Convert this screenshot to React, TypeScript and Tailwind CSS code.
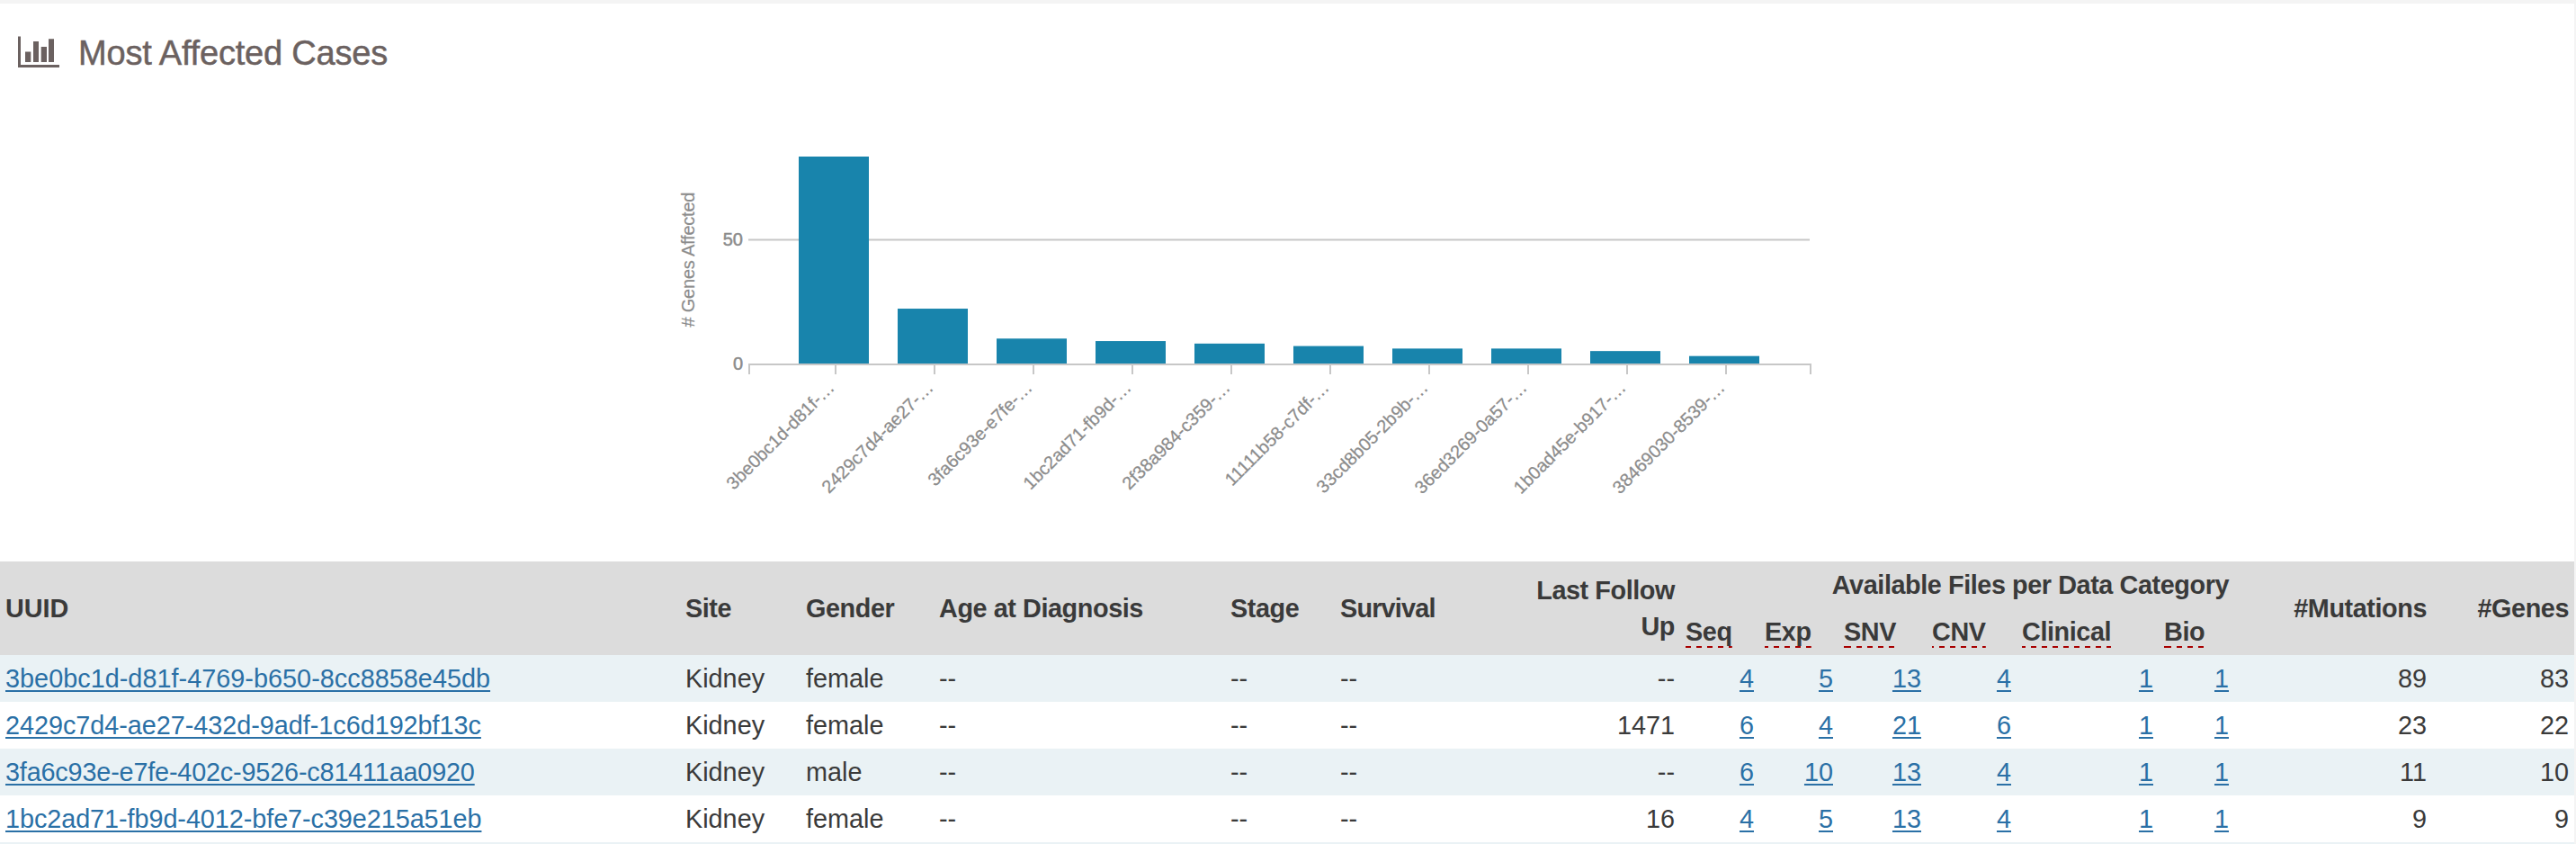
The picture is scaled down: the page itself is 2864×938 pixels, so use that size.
import type { ReactNode } from "react";

const bars = [
  { id: "3be0bc1d-d81f-…", genes: 83 },
  { id: "2429c7d4-ae27-…", genes: 22 },
  { id: "3fa6c93e-e7fe-…", genes: 10 },
  { id: "1bc2ad71-fb9d-…", genes: 9 },
  { id: "2f38a984-c359-…", genes: 8 },
  { id: "11111b58-c7df-…", genes: 7 },
  { id: "33cd8b05-2b9b-…", genes: 6 },
  { id: "36ed3269-0a57-…", genes: 6 },
  { id: "1b0ad45e-b917-…", genes: 5 },
  { id: "38469030-8539-…", genes: 3 },
];

const unit = 230 / 83;

type Row = {
  uuid: string;
  tracking: string;
  gender: string;
  followUp: string;
  files: number[];
  mutations: number;
  genes: number;
};

const rows: Row[] = [
  { uuid: "3be0bc1d-d81f-4769-b650-8cc8858e45db", tracking: "tracking-[0.03px]", gender: "female", followUp: "--", files: [4, 5, 13, 4, 1, 1], mutations: 89, genes: 83 },
  { uuid: "2429c7d4-ae27-432d-9adf-1c6d192bf13c", tracking: "tracking-[-0.03px]", gender: "female", followUp: "1471", files: [6, 4, 21, 6, 1, 1], mutations: 23, genes: 22 },
  { uuid: "3fa6c93e-e7fe-402c-9526-c81411aa0920", tracking: "tracking-[-0.17px]", gender: "male", followUp: "--", files: [6, 10, 13, 4, 1, 1], mutations: 11, genes: 10 },
  { uuid: "1bc2ad71-fb9d-4012-bfe7-c39e215a51eb", tracking: "tracking-[-0.06px]", gender: "female", followUp: "16", files: [4, 5, 13, 4, 1, 1], mutations: 9, genes: 9 },
];

const categories = [
  { name: "Seq", dash: "bg-[repeating-linear-gradient(90deg,#a80000_0_6px,transparent_6px_12px)]" },
  { name: "Exp", dash: "bg-[repeating-linear-gradient(90deg,#a80000_-2px_4px,transparent_4px_10px)]" },
  { name: "SNV", dash: "bg-[linear-gradient(90deg,#a80000_2px,transparent_2px),repeating-linear-gradient(90deg,#a80000_2px_8px,transparent_8px_14px)]" },
  { name: "CNV", dash: "bg-[repeating-linear-gradient(90deg,#a80000_-4px_2px,transparent_2px_8px)]" },
  { name: "Clinical", dash: "bg-[repeating-linear-gradient(90deg,#a80000_-2px_4px,transparent_4px_10px)]" },
  { name: "Bio", dash: "bg-[linear-gradient(90deg,#a80000_2px,transparent_2px),repeating-linear-gradient(90deg,#a80000_2px_8px,transparent_8px_14px)]" },
];

function Chart() {
  return (
    <svg width="1300" height="440" viewBox="740 150 1300 440" className="block">
      <g fill="#c7c7c7">
        <rect x="832" y="265.5" width="1180" height="2" />
        <rect x="832" y="404" width="1182" height="2" />
        <rect x="832" y="404" width="2" height="12" />
        <rect x="2012" y="404" width="2" height="12" />
        {bars.map((b, i) => (
          <rect key={b.id} x={928 + i * 110} y="404" width="2" height="12" />
        ))}
      </g>
      {bars.map((b, i) => (
        <rect key={b.id} x={888 + i * 110} y={404 - b.genes * unit} width="78" height={b.genes * unit} fill="#1884ac" />
      ))}
      <g fill="#8c8c8c" fontSize="20">
        <text x="826" y="273" textAnchor="end" stroke="#8c8c8c" strokeWidth="0.5">50</text>
        <text x="826" y="411" textAnchor="end" stroke="#8c8c8c" strokeWidth="0.5">0</text>
        <text transform="translate(772 288.5) rotate(-90)" textAnchor="middle" textLength="150" stroke="#8c8c8c" strokeWidth="0.2">
          # Genes Affected
        </text>
        {bars.map((b, i) => (
          <text
            key={b.id}
            transform={`translate(${929 + i * 110} 432) rotate(-45)`}
            textAnchor="end"
            stroke="#8c8c8c"
            strokeWidth="0.25"
          >
            {b.id}
          </text>
        ))}
      </g>
    </svg>
  );
}

function Link({ className = "", children }: { className?: string; children: ReactNode }) {
  return (
    <a
      href="#"
      className={`text-[#2a70a6] underline decoration-2 underline-offset-[3px] [text-decoration-skip-ink:none] ${className}`}
    >
      {children}
    </a>
  );
}

export default function App() {
  return (
    <div className="h-[938px] w-[2864px] overflow-hidden border-t-4 border-r-2 border-[#f4f4f4] bg-white font-['Liberation_Sans',Arial,Helvetica,sans-serif] text-[#3a3a3a]">
      <div className="flex h-[146px] items-start pt-[33px] pl-5 text-[#6b6160]">
        <svg width="46" height="36" viewBox="0 0 46 36" fill="currentColor" className="mt-[3px]">
          <path d="M0 .5h3V32h43v3H0z" />
          <path d="M8 17.5h6.3V29H8zM17 6h6v23h-6zM25.7 12H32v17h-6.3zM34 3.2h6V29h-6z" />
        </svg>
        <h1 className="ml-[21px] text-[38px] leading-[44px] tracking-[-0.2px] [-webkit-text-stroke:0.5px_#6b6160]">
          Most Affected Cases
        </h1>
      </div>
      <div className="flex h-[474px] pl-[740px]">
        <Chart />
      </div>
      <table className="w-[2862px] table-fixed border-collapse text-[28.8px] leading-10">
        <colgroup>
          <col className="w-[756px]" />
          <col className="w-[134px]" />
          <col className="w-[148px]" />
          <col className="w-[324px]" />
          <col className="w-[122px]" />
          <col className="w-[204px]" />
          <col className="w-[180px]" />
          <col className="w-[88px]" />
          <col className="w-[88px]" />
          <col className="w-[98px]" />
          <col className="w-[100px]" />
          <col className="w-[158px]" />
          <col className="w-[84px]" />
          <col className="w-[220px]" />
          <col className="w-[158px]" />
        </colgroup>
        <thead className="bg-[#dcdcdc] font-bold tracking-[-0.42px]">
          <tr className="h-[52px]">
            <th rowSpan={2} className="px-1.5 py-0 text-left tracking-normal">UUID</th>
            <th rowSpan={2} className="px-1.5 py-0 text-left">Site</th>
            <th rowSpan={2} className="px-1.5 py-0 text-left">Gender</th>
            <th rowSpan={2} className="px-1.5 py-0 text-left">Age at Diagnosis</th>
            <th rowSpan={2} className="px-1.5 py-0 text-left">Stage</th>
            <th rowSpan={2} className="px-1.5 py-0 text-left tracking-[-0.8px]">Survival</th>
            <th rowSpan={2} className="px-1.5 py-0 text-right">Last Follow Up</th>
            <th colSpan={6} className="px-1.5 py-0 text-right">Available Files per Data Category</th>
            <th rowSpan={2} className="px-1.5 py-0 text-right">#Mutations</th>
            <th rowSpan={2} className="px-1.5 py-0 text-right">#Genes</th>
          </tr>
          <tr className="h-[52px]">
            {categories.map((c) => (
              <th key={c.name} className="px-1.5 py-0 text-left">
                <span className={`bg-[length:100%_2px] bg-bottom bg-no-repeat pb-0.5 ${c.dash}`}>{c.name}</span>
              </th>
            ))}
          </tr>
        </thead>
        <tbody>
          {rows.map((r) => (
            <tr key={r.uuid} className="h-[52px] odd:bg-[#eaf2f5]">
              <td className="px-1.5 py-0">
                <Link className={r.tracking}>{r.uuid}</Link>
              </td>
              <td className="px-1.5 py-0">Kidney</td>
              <td className="px-1.5 py-0">{r.gender}</td>
              <td className="px-1.5 py-0">--</td>
              <td className="px-1.5 py-0">--</td>
              <td className="px-1.5 py-0">--</td>
              <td className="px-1.5 py-0 text-right">{r.followUp}</td>
              {r.files.map((n, i) => (
                <td key={categories[i].name} className="px-1.5 py-0 text-right">
                  <Link>{n}</Link>
                </td>
              ))}
              <td className="px-1.5 py-0 text-right">{r.mutations}</td>
              <td className="px-1.5 py-0 text-right">{r.genes}</td>
            </tr>
          ))}
        </tbody>
      </table>
      <div className="h-0.5 bg-[#eaf2f5]" />
    </div>
  );
}
